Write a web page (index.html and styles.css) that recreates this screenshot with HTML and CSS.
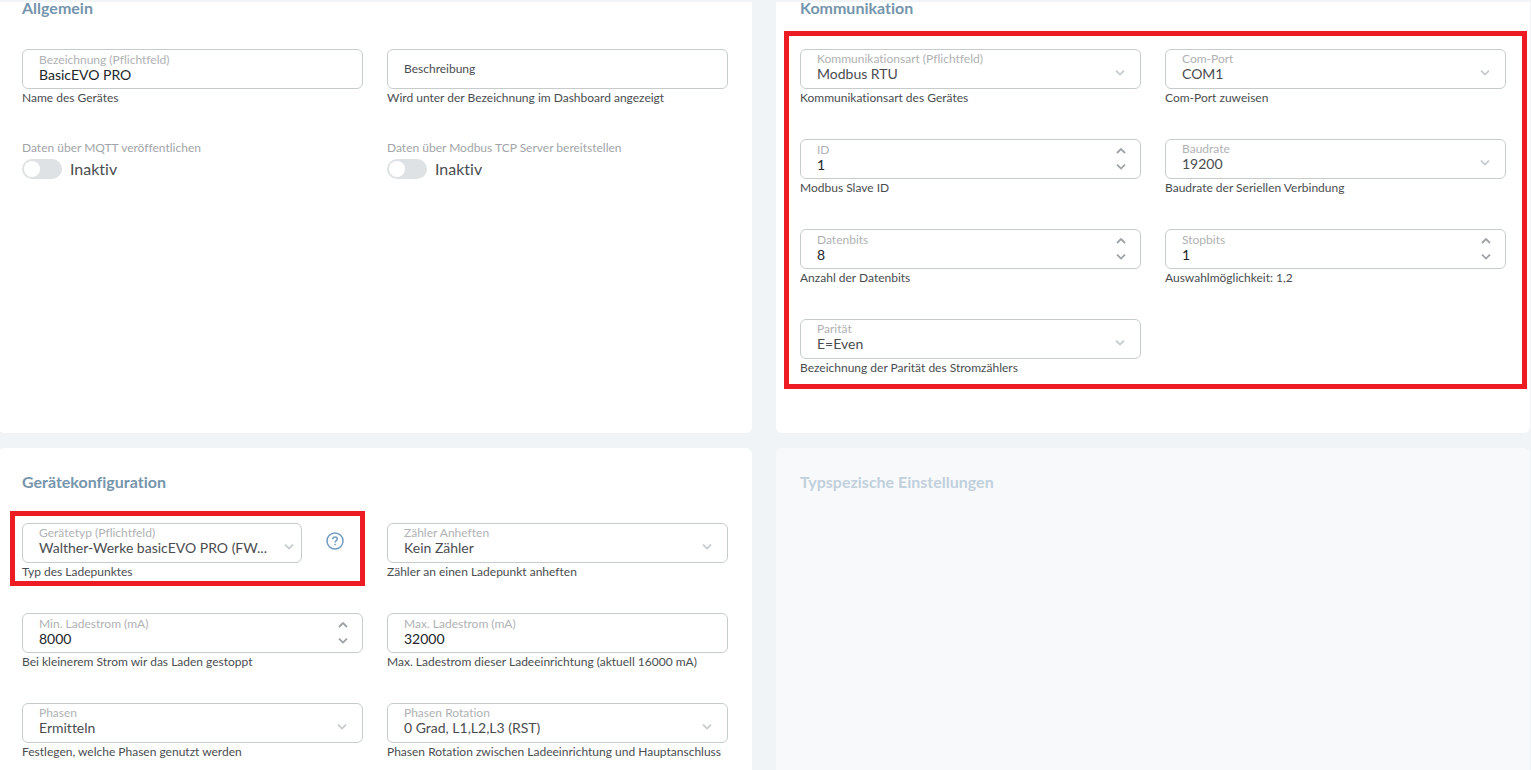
FILE: index.html
```
<!DOCTYPE html>
<html lang="de">
<head>
  <meta charset="UTF-8">
  <meta name="viewport" content="width=device-width, initial-scale=1.0">
  <title>Gerät bearbeiten</title>
  <link rel="stylesheet" href="styles.css">
</head>
<body>
  <!-- shared icons -->
  <svg class="sprite" aria-hidden="true">
    <symbol id="down" viewBox="0 0 10 6"><path d="M1 0.6 5 4.6 9 0.6" fill="none" stroke="currentColor" stroke-width="1.8"/></symbol>
    <symbol id="up" viewBox="0 0 10 6"><path d="M1 5 5 1 9 5" fill="none" stroke="currentColor" stroke-width="1.8"/></symbol>
  </svg>

  <form class="page">
    <section class="card">
      <h2>Allgemein</h2>
      <div class="fields">
        <div class="cell">
          <div class="field">
            <label for="name">Bezeichnung (Pflichtfeld)</label>
            <input type="text" id="name" value="BasicEVO PRO" required>
          </div>
          <p class="hint">Name des Gerätes</p>
        </div>
        <div class="cell">
          <div class="field">
            <input type="text" id="beschreibung" class="empty" placeholder="Beschreibung" aria-label="Beschreibung">
          </div>
          <p class="hint">Wird unter der Bezeichnung im Dashboard angezeigt</p>
        </div>
        <div class="cell">
          <label class="switch-label" for="mqtt">Daten über MQTT veröffentlichen</label>
          <div class="switch-row">
            <input type="checkbox" role="switch" id="mqtt" class="switch">
            <span>Inaktiv</span>
          </div>
        </div>
        <div class="cell">
          <label class="switch-label" for="modbus">Daten über Modbus TCP Server bereitstellen</label>
          <div class="switch-row">
            <input type="checkbox" role="switch" id="modbus" class="switch">
            <span>Inaktiv</span>
          </div>
        </div>
      </div>
    </section>

    <section class="card">
      <h2>Kommunikation</h2>
      <div class="fields marked marked-group">
        <div class="cell">
          <div class="field select">
            <label for="art">Kommunikationsart (Pflichtfeld)</label>
            <select id="art"><option>Modbus RTU</option></select>
            <svg class="arrow"><use href="#down"/></svg>
          </div>
          <p class="hint">Kommunikationsart des Gerätes</p>
        </div>
        <div class="cell">
          <div class="field select">
            <label for="port">Com-Port</label>
            <select id="port"><option>COM1</option></select>
            <svg class="arrow"><use href="#down"/></svg>
          </div>
          <p class="hint">Com-Port zuweisen</p>
        </div>
        <div class="cell">
          <div class="field">
            <label for="slave">ID</label>
            <input type="number" id="slave" value="1">
            <div class="spin">
              <button type="button" aria-label="Erhöhen"><svg><use href="#up"/></svg></button>
              <button type="button" aria-label="Verringern"><svg><use href="#down"/></svg></button>
            </div>
          </div>
          <p class="hint">Modbus Slave ID</p>
        </div>
        <div class="cell">
          <div class="field select">
            <label for="baud">Baudrate</label>
            <select id="baud"><option>19200</option></select>
            <svg class="arrow"><use href="#down"/></svg>
          </div>
          <p class="hint">Baudrate der Seriellen Verbindung</p>
        </div>
        <div class="cell">
          <div class="field">
            <label for="datenbits">Datenbits</label>
            <input type="number" id="datenbits" value="8">
            <div class="spin">
              <button type="button" aria-label="Erhöhen"><svg><use href="#up"/></svg></button>
              <button type="button" aria-label="Verringern"><svg><use href="#down"/></svg></button>
            </div>
          </div>
          <p class="hint">Anzahl der Datenbits</p>
        </div>
        <div class="cell">
          <div class="field">
            <label for="stopbits">Stopbits</label>
            <input type="number" id="stopbits" value="1" min="1" max="2">
            <div class="spin">
              <button type="button" aria-label="Erhöhen"><svg><use href="#up"/></svg></button>
              <button type="button" aria-label="Verringern"><svg><use href="#down"/></svg></button>
            </div>
          </div>
          <p class="hint">Auswahlmöglichkeit: 1,2</p>
        </div>
        <div class="cell">
          <div class="field select">
            <label for="paritaet">Parität</label>
            <select id="paritaet"><option>E=Even</option></select>
            <svg class="arrow"><use href="#down"/></svg>
          </div>
          <p class="hint">Bezeichnung der Parität des Stromzählers</p>
        </div>
      </div>
    </section>

    <section class="card card-bottom">
      <h2>Gerätekonfiguration</h2>
      <div class="fields">
        <div class="cell marked marked-cell">
          <div class="with-help">
            <div class="field select">
              <label for="typ">Gerätetyp (Pflichtfeld)</label>
              <select id="typ"><option>Walther-Werke basicEVO PRO (FW...</option></select>
              <svg class="arrow"><use href="#down"/></svg>
            </div>
            <button type="button" class="help" aria-label="Hilfe">
              <svg viewBox="0 0 18 18" fill="none" stroke="currentColor" stroke-width="1.5">
                <circle cx="9" cy="9" r="8"/>
                <path d="M6.7 7.2C6.7 5.8 7.7 5 9 5s2.3.8 2.3 2c0 1.6-2.2 1.7-2.2 3.4"/>
                <path d="M9.1 11.8v1.5"/>
              </svg>
            </button>
          </div>
          <p class="hint">Typ des Ladepunktes</p>
        </div>
        <div class="cell">
          <div class="field select">
            <label for="zaehler">Zähler Anheften</label>
            <select id="zaehler"><option>Kein Zähler</option></select>
            <svg class="arrow"><use href="#down"/></svg>
          </div>
          <p class="hint">Zähler an einen Ladepunkt anheften</p>
        </div>
        <div class="cell">
          <div class="field">
            <label for="min">Min. Ladestrom (mA)</label>
            <input type="number" id="min" value="8000">
            <div class="spin">
              <button type="button" aria-label="Erhöhen"><svg><use href="#up"/></svg></button>
              <button type="button" aria-label="Verringern"><svg><use href="#down"/></svg></button>
            </div>
          </div>
          <p class="hint">Bei kleinerem Strom wir das Laden gestoppt</p>
        </div>
        <div class="cell">
          <div class="field">
            <label for="max">Max. Ladestrom (mA)</label>
            <input type="text" id="max" value="32000">
          </div>
          <p class="hint">Max. Ladestrom dieser Ladeeinrichtung (aktuell 16000 mA)</p>
        </div>
        <div class="cell">
          <div class="field select">
            <label for="phasen">Phasen</label>
            <select id="phasen"><option>Ermitteln</option></select>
            <svg class="arrow"><use href="#down"/></svg>
          </div>
          <p class="hint">Festlegen, welche Phasen genutzt werden</p>
        </div>
        <div class="cell">
          <div class="field select">
            <label for="rotation">Phasen Rotation</label>
            <select id="rotation"><option>0 Grad, L1,L2,L3 (RST)</option></select>
            <svg class="arrow"><use href="#down"/></svg>
          </div>
          <p class="hint">Phasen Rotation zwischen Ladeeinrichtung und Hauptanschluss</p>
        </div>
      </div>
    </section>

    <section class="card card-bottom disabled">
      <h2>Typspezische Einstellungen</h2>
    </section>
  </form>
</body>
</html>
```
FILE: styles.css
```
* {
  box-sizing: border-box;
}
body {
  margin: 0;
  font-family: Lato, sans-serif;
  font-size: 12px;
  font-variant-ligatures: none;
  color: #4a4d50;
  background: #f0f4f7;
  overflow-x: hidden;
}
.sprite {
  display: none;
}
.page {
  display: grid;
  grid-template-columns: 1fr 1fr;
  grid-template-rows: auto 1fr;
  gap: 15px 24px;
  min-height: 100vh;
  margin-left: -2px;
  padding: 2px 1px 0 0;
}

/* cards */
.card {
  padding: 0 24px 56px;
  background: #fff;
  border-radius: 0 0 6px 6px;
}
.card-bottom {
  padding: 28px 24px 8px;
  border-radius: 6px 6px 0 0;
}
.card h2 {
  margin: 0 0 35px;
  font-size: 16px;
  line-height: 12px;
  font-weight: 700;
  color: #7595ac;
}
.disabled {
  background: #f8f9fb;
}
.card.disabled h2 {
  color: #c1d0dc;
}
.fields {
  display: grid;
  grid-template-columns: 1fr 1fr;
  gap: 32px 24px;
}
.cell {
  min-width: 0;
}

/* form fields */
.field {
  position: relative;
  display: flex;
  flex-direction: column;
  height: 40px;
  padding: 3px 16px;
  border: 1px solid #c6cccc;
  border-radius: 6px;
  background: #fff;
}
.field label {
  line-height: 14px;
  color: #b0b2b4;
}
.field input,
.field select {
  width: 100%;
  height: 14px;
  margin: 0;
  padding: 0;
  border: 0;
  outline: 0;
  background: none;
  font: 14px/14px Lato, sans-serif;
  font-variant-ligatures: none;
  color: #212529;
  appearance: none;
}
.select {
  padding-top: 2px;
}
.field select {
  height: 16px;
  color: #4a4d50;
}
.field input.empty {
  height: 30px;
  font-size: 12px;
}
.empty::placeholder {
  color: #4a4d50;
  opacity: 1;
}
input::-webkit-inner-spin-button {
  appearance: none;
}
.hint {
  margin: 0;
  line-height: 18px;
}
.arrow {
  position: absolute;
  top: 20px;
  right: 15px;
  width: 10px;
  height: 6px;
  color: #c6cbcf;
  pointer-events: none;
}
.spin {
  position: absolute;
  top: 3px;
  right: 14px;
  display: grid;
  grid-template-rows: 16px 16px;
}
.spin button {
  display: grid;
  place-items: center;
  padding: 0;
  border: 0;
  background: none;
  color: #9fa3a7;
  cursor: pointer;
}
.spin svg {
  width: 10px;
  height: 6px;
}
.with-help {
  display: flex;
  align-items: center;
}
.with-help .field {
  flex: 1;
}
.with-help .arrow {
  right: 7px;
}
.help {
  width: 18px;
  height: 18px;
  margin: 0 19px 4px 24px;
  padding: 0;
  border: 0;
  background: none;
  color: #6f9cc3;
  cursor: pointer;
}
.help svg {
  display: block;
}

/* switches */
.switch-label {
  display: block;
  line-height: 18px;
  color: #a2a5a8;
}
.switch-row {
  display: flex;
  align-items: center;
  gap: 8px;
  margin-top: 2px;
  font-size: 16px;
  line-height: 20px;
}
.switch {
  appearance: none;
  width: 40px;
  height: 20px;
  margin: 0;
  padding: 2px;
  border-radius: 10px;
  background: #dee2e5;
}
.switch::before {
  content: "";
  display: block;
  width: 16px;
  height: 16px;
  border-radius: 50%;
  background: #fff;
}
.switch:checked::before {
  margin-left: 20px;
}

/* red frames around the settings to check */
.marked {
  position: relative;
}
.marked::after {
  content: "";
  position: absolute;
  border: 5px solid #ed1c24;
  pointer-events: none;
}
.marked-group::after {
  inset: -18px -21px -12px -16px;
}
.marked-cell::after {
  inset: -12px -2px -5px -12px;
}

@media (max-width: 900px) {
  .page {
    grid-template-columns: 1fr;
  }
}
```
